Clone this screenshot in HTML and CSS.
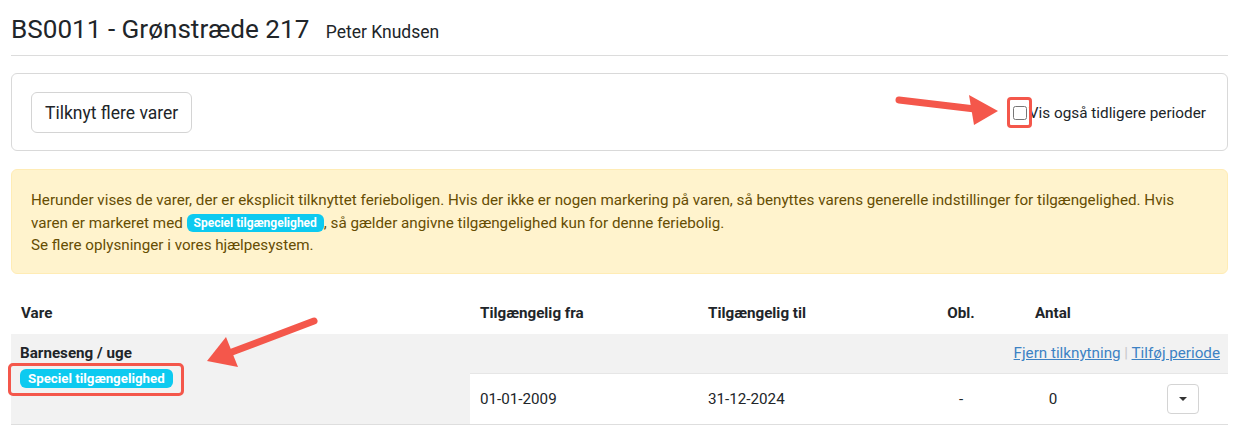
FILE: index.html
```html
<!DOCTYPE html>
<html lang="da">
<head>
    <meta charset="UTF-8">
    <title>BS0011 - Grønstræde 217</title>
    <link rel="stylesheet" href="styles.css">
</head>
<body>
    <div class="page">
        <div class="page-header">
            <h1>BS0011 - Grønstræde 217 <small>Peter Knudsen</small></h1>
        </div>

        <div class="toolbar">
            <button class="btn">Tilknyt flere varer</button>
            <label class="check">
                <span class="marked"><input type="checkbox"></span>
                Vis også tidligere perioder
            </label>
        </div>

        <div class="alert">
            Herunder vises de varer, der er eksplicit tilknyttet ferieboligen. Hvis der ikke er nogen markering på varen, så benyttes varens generelle indstillinger for tilgængelighed. Hvis varen er markeret med <span class="badge">Speciel tilgængelighed</span>, så gælder angivne tilgængelighed kun for denne feriebolig.<br>
            Se flere oplysninger i vores hjælpesystem.
        </div>

        <table class="items">
            <colgroup>
                <col class="c-name">
                <col class="c-from">
                <col class="c-to">
                <col class="c-obl">
                <col class="c-qty">
                <col class="c-act">
            </colgroup>
            <thead>
                <tr>
                    <th>Vare</th>
                    <th>Tilgængelig fra</th>
                    <th>Tilgængelig til</th>
                    <th class="center">Obl.</th>
                    <th class="center">Antal</th>
                    <th></th>
                </tr>
            </thead>
            <tbody>
                <tr class="item-row">
                    <td rowspan="2" class="item-name">
                        <strong>Barneseng / uge</strong>
                        <div><span class="badge badge-lg marked-badge">Speciel tilgængelighed</span></div>
                    </td>
                    <td colspan="5" class="links">
                        <a href="#">Fjern tilknytning</a> <span class="sep">|</span> <a href="#">Tilføj periode</a>
                    </td>
                </tr>
                <tr class="period-row">
                    <td>01-01-2009</td>
                    <td>31-12-2024</td>
                    <td class="center">-</td>
                    <td class="center">0</td>
                    <td class="act"><button class="caret-btn"><span class="caret"></span></button></td>
                </tr>
            </tbody>
        </table>
    </div>

    <!-- annotation arrows -->
    <svg class="arrows" width="1237" height="428" viewBox="0 0 1237 428">
        <line x1="899" y1="100" x2="975" y2="109" stroke="#f4574b" stroke-width="7" stroke-linecap="round"/>
        <polygon points="998,111 969,95 974,125" fill="#f4574b"/>
        <line x1="314" y1="321" x2="232" y2="352" stroke="#f4574b" stroke-width="7" stroke-linecap="round"/>
        <polygon points="207,361 226,337 238,367" fill="#f4574b"/>
    </svg>
</body>
</html>
```

FILE: styles.css
```css
body {
    margin: 0;
    font-family: Roboto, "Liberation Sans", sans-serif;
    font-size: 15.2px;
    color: #212529;
    background: #fff;
}

.page {
    padding: 0 9px 0 11px;
}

.page-header {
    border-bottom: 1px solid #dcdcdc;
    padding: 14px 0 8px;
}

h1 {
    margin: 0;
    font-size: 26.1px;
    font-weight: 400;
    line-height: 30px;
}

h1 small {
    font-size: 17.5px;
    margin-left: 10px;
}

.toolbar {
    margin-top: 17px;
    border: 1px solid #d9d9d9;
    border-radius: 6px;
    padding: 18px 21px 17px 19px;
    display: flex;
    align-items: center;
    justify-content: space-between;
}

.btn {
    font-family: inherit;
    font-size: 17.5px;
    color: #212529;
    background: #fff;
    border: 1px solid #d4d4d4;
    border-radius: 6px;
    height: 41px;
    padding: 0 13px;
}

.check {
    display: flex;
    align-items: center;
    font-size: 15.3px;
}

.marked {
    position: relative;
    display: inline-flex;
    margin-right: 1px;
}

.marked input {
    margin: 0 1px;
    width: 14px;
    height: 14px;
}

.marked::after {
    content: "";
    position: absolute;
    left: -5px;
    right: -4px;
    top: -9px;
    bottom: -8px;
    border: 3px solid #f4574b;
    border-radius: 4px;
}

.alert {
    margin-top: 18px;
    background: #fff3cd;
    border: 1px solid #ffecb5;
    border-radius: 6px;
    color: #664d03;
    padding: 19px 19px 16px;
    line-height: 22.5px;
}

.badge {
    display: inline-block;
    background: #0dcaf0;
    color: #fff;
    font-size: 12px;
    font-weight: 700;
    line-height: 18px;
    padding: 0 7px;
    border-radius: 6px;
    vertical-align: 1px;
}

.badge-lg {
    font-size: 13.3px;
    line-height: 19px;
    padding: 0 8px;
}

.marked-badge {
    position: relative;
    margin-top: 6px;
}

.marked-badge::after {
    content: "";
    position: absolute;
    left: -12px;
    right: -11px;
    top: -6px;
    bottom: -8px;
    border: 3px solid #f4574b;
    border-radius: 5px;
}

.items {
    width: 100%;
    margin-top: 19px;
    border-collapse: collapse;
    table-layout: fixed;
}

.c-name { width: 459px; }
.c-from { width: 228px; }
.c-to { width: 239px; }
.c-obl { width: 48px; }
.c-qty { width: 136px; }
.c-act { width: 107px; }

th {
    text-align: left;
    font-weight: 700;
    padding: 0 10px;
    height: 41px;
}

.center {
    text-align: center;
}

.item-row td {
    background: #f2f2f2;
    height: 39px;
    padding: 0 8px 0 9px;
}

.item-name {
    vertical-align: top;
    padding-top: 9px !important;
    background: #f2f2f2;
    border-bottom: 1px solid #dedede;
}

.item-name strong {
    line-height: 20px;
}

.links {
    text-align: right;
}

.links a {
    color: #3d82c4;
}

.sep {
    color: #c8c8c8;
}

.period-row td {
    height: 50px;
    padding: 0 10px;
    border-top: 1px solid #e6e6e6;
    border-bottom: 1px solid #dedede;
}

.period-row .act {
    text-align: right;
    padding-right: 29px;
}

.caret-btn {
    width: 32px;
    height: 30px;
    background: #fff;
    border: 1px solid #d4d4d4;
    border-radius: 4px;
    padding: 0;
    display: inline-flex;
    align-items: center;
    justify-content: center;
    vertical-align: middle;
}

.caret {
    width: 0;
    height: 0;
    border-left: 4px solid transparent;
    border-right: 4px solid transparent;
    border-top: 4px solid #333;
}

.arrows {
    position: absolute;
    left: 0;
    top: 0;
    pointer-events: none;
}
```
